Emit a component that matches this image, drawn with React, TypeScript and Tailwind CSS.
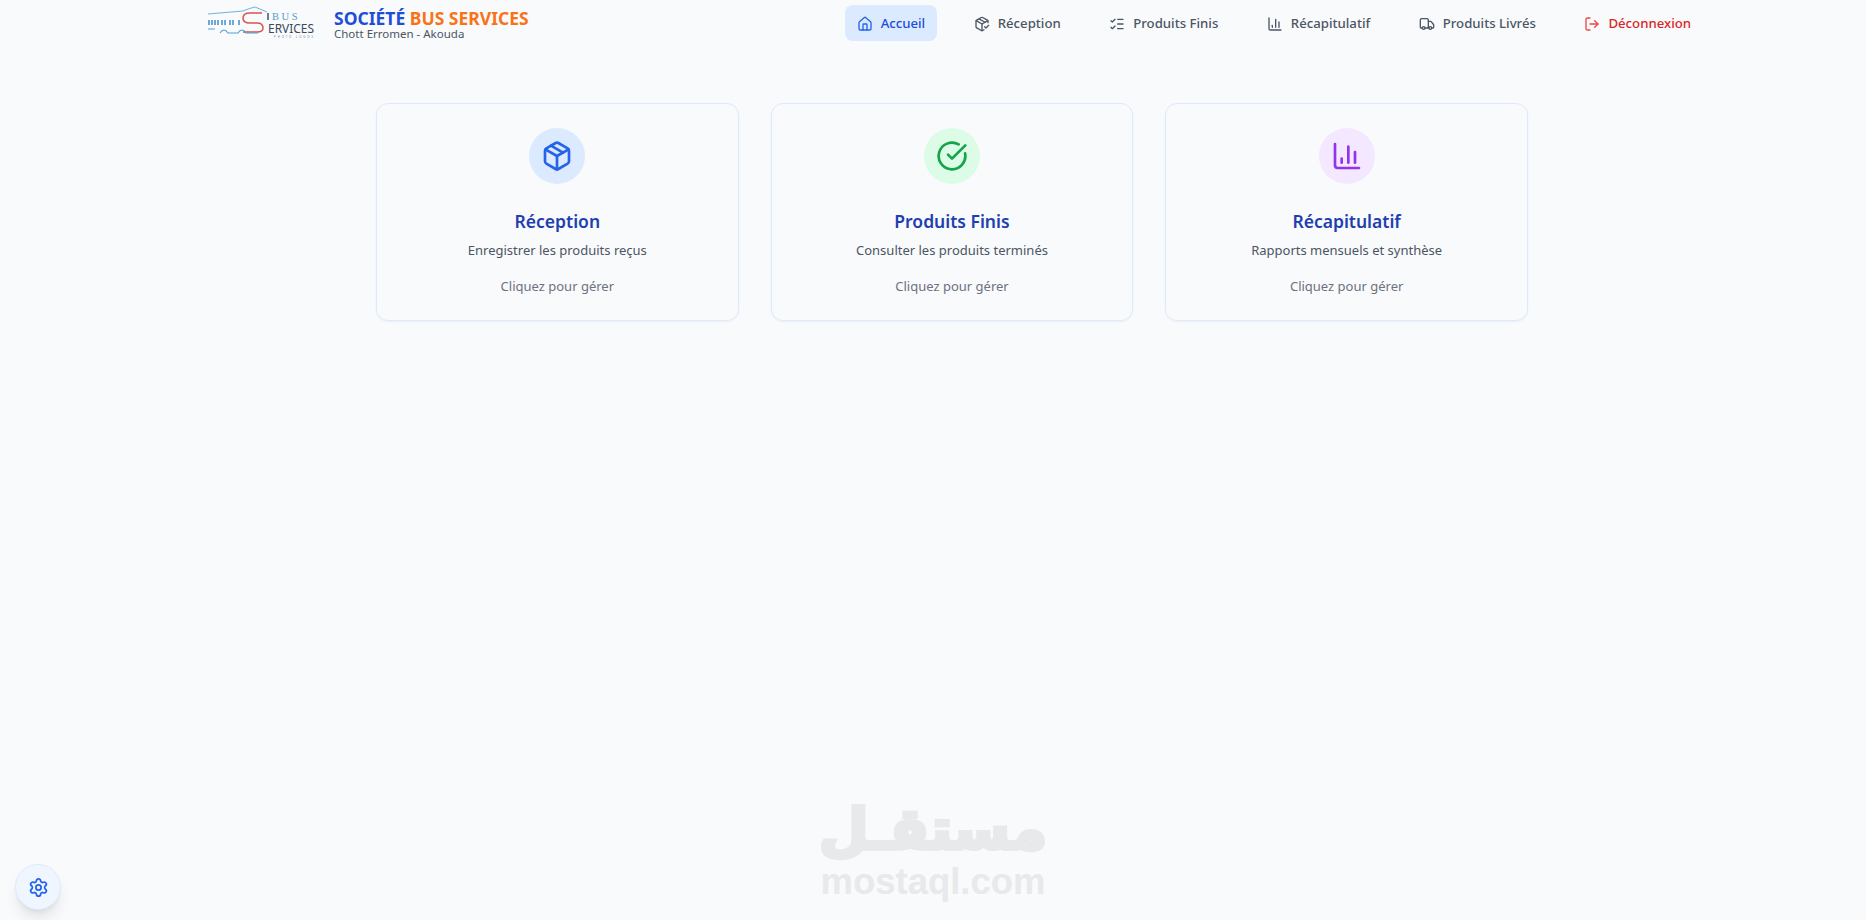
import { ChartColumn, CircleCheckBig, House, ListChecks, LogOut, Package, PackageCheck, Settings, Truck } from "lucide-react";

const navItems = [
  { label: "Accueil", icon: House, className: "bg-[#dbeafe] text-[#1d4ed8]", iconClass: "text-[#2563eb]" },
  { label: "Réception", icon: PackageCheck, className: "text-[#4b5563]", iconClass: "text-[#4b5563]" },
  { label: "Produits Finis", icon: ListChecks, className: "text-[#4b5563]", iconClass: "text-[#4b5563]" },
  { label: "Récapitulatif", icon: ChartColumn, className: "text-[#4b5563]", iconClass: "text-[#4b5563]" },
  { label: "Produits Livrés", icon: Truck, className: "text-[#4b5563]", iconClass: "text-[#4b5563]" },
  { label: "Déconnexion", icon: LogOut, className: "text-[#dc2626]", iconClass: "text-[#ef4444]" },
];

const cards = [
  { title: "Réception", text: "Enregistrer les produits reçus", icon: Package, circle: "bg-[#dbeafe]", color: "text-[#2563eb]" },
  { title: "Produits Finis", text: "Consulter les produits terminés", icon: CircleCheckBig, circle: "bg-[#dcfce7]", color: "text-[#16a34a]" },
  { title: "Récapitulatif", text: "Rapports mensuels et synthèse", icon: ChartColumn, circle: "bg-[#f3e8ff]", color: "text-[#9333ea]" },
];

const Logo = () => (
  <svg width="112" height="40" viewBox="0 0 112 40" className="shrink-0">
    <path d="M2 11 L37 8 Q44 5 49 4 L61 9" fill="none" stroke="#6fb3dc" strokeWidth="1" />
    <path d="M3 17v5M6 17v5M9 17v5M12 17v5M16 17v5M19 17v5M24 17v5M27 17v5M33 17v5" fill="none" stroke="#4a97c9" strokeWidth="1.6" />
    <path d="M56 10 H44 Q37 10 37 15 Q37 20 44 20 H51 Q57 20 57 25 Q57 29 51 29 H37" fill="none" stroke="#d9534f" strokeWidth="1.5" />
    <path d="M2 26h7M14 30q4-6 8 0h10q4-6 8 0h12" fill="none" stroke="#4aa3d8" strokeWidth="1.1" />
    <path d="M62 10v7" stroke="#3f5f85" strokeWidth="1.6" />
    <text x="66" y="17" fontFamily="'Liberation Serif', serif" fontSize="10.5" fill="#5a9cc9" letterSpacing="2.6">BUS</text>
    <text x="62" y="30" fontFamily="'Noto Sans', sans-serif" fontSize="12" fill="#3a4a5e" textLength="46" lengthAdjust="spacingAndGlyphs">ERVICES</text>
    <text x="68" y="35" fontFamily="'Noto Sans', sans-serif" fontSize="2.8" fill="#7b8794" textLength="39">PHOTO LOGOS</text>
  </svg>
);

const Card = ({ title, text, icon: Icon, circle, color }: (typeof cards)[number]) => (
  <div className="w-[362.67px] h-[218px] shrink-0 rounded-xl border border-[#dbeafe] shadow-xs flex flex-col items-center pt-6">
    <div className={`w-14 h-14 rounded-full flex items-center justify-center ${circle}`}>
      <Icon className={`w-8 h-8 ${color}`} strokeWidth={2} />
    </div>
    <h3 className="mt-[23px] text-[17.5px] leading-7 font-semibold text-[#1e40af]">{title}</h3>
    <p className="mt-[5px] text-[13px] leading-5 text-[#4b5563]">{text}</p>
    <p className="mt-4 text-[13px] leading-5 text-[#6b7280]">Cliquez pour gérer</p>
  </div>
);

export default function App() {
  return (
    <div className="relative h-[920px] overflow-hidden bg-[#f9fafc] font-['Noto_Sans',sans-serif]">
      <header className="flex items-center h-[46px] pl-[206px]">
        <Logo />
        <div className="ml-[16px] flex flex-col">
          <span className="text-[17.5px] leading-[20px] font-bold text-[#1d4ed8] whitespace-nowrap">
            SOCIÉTÉ <span className="text-[#f97316]">BUS SERVICES</span>
          </span>
          <span className="text-[11.5px] leading-[11px] text-[#4b5563]">Chott Erromen - Akouda</span>
        </div>
        <nav className="ml-[316px] flex items-center gap-[24.5px]">
          {navItems.map(({ label, icon: Icon, className, iconClass }) => (
            <a key={label} className={`flex items-center gap-2 h-9 px-3 pt-px rounded-lg text-[13.2px] font-medium whitespace-nowrap ${className}`}>
              <Icon className={`w-4 h-4 ${iconClass}`} />
              {label}
            </a>
          ))}
        </nav>
      </header>

      <main className="mt-[57px] ml-[376px] flex gap-[32px]">
        {cards.map((card) => (
          <Card key={card.title} {...card} />
        ))}
      </main>

      <div className="absolute inset-x-0 bottom-[20px] flex flex-col items-center text-[#e8e9ea] pointer-events-none">
        <span className="font-['DejaVu_Sans',sans-serif] font-bold text-[57px] leading-[70px] [-webkit-text-stroke:4px_#e8e9ea] [paint-order:stroke]" dir="rtl">مستقـل</span>
        <span className="font-['Liberation_Sans',sans-serif] font-bold text-[36.5px] leading-[36px]">mostaql.com</span>
      </div>

      <button className="absolute left-[15px] bottom-[10px] w-[46px] h-[46px] rounded-full bg-[#eff6ff] border border-[#dbeafe] shadow-lg flex items-center justify-center">
        <Settings className="w-[21px] h-[21px] text-[#2563eb]" />
      </button>
    </div>
  );
}
